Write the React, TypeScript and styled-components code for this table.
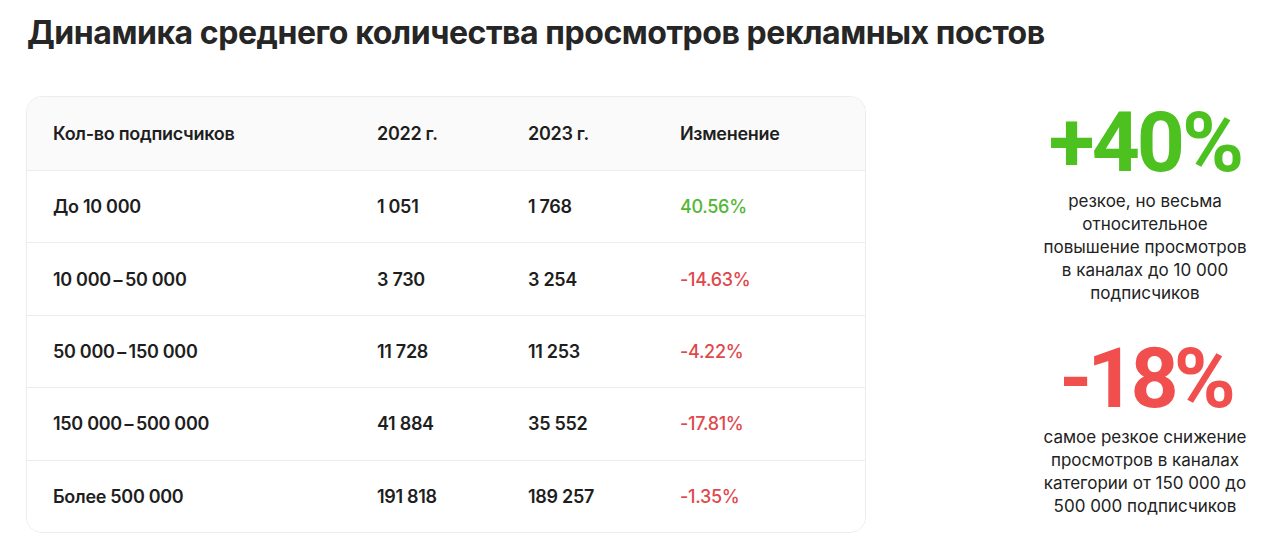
import React from "react";
import styled, { createGlobalStyle } from "styled-components";

const Global = createGlobalStyle`
  html, body { margin: 0; padding: 0; background: #ffffff; }
  body { font-family: Inter, "Noto Sans", sans-serif; color: #1e1e1e; }
`;

const Page = styled.div`
  width: 1280px;
  height: 559px;
  box-sizing: border-box;
  padding: 13px 0 0 26px;
  display: flex;
  flex-direction: column;
`;

const Title = styled.h1`
  margin: 0 0 0 1px;
  font-size: 32px;
  line-height: 40px;
  font-weight: 700;
  color: #262626;
  letter-spacing: -0.45px;
`;

const Body = styled.div`
  margin-top: 43px;
  display: flex;
  align-items: flex-start;
`;

const Card = styled.div`
  width: 840px;
  box-sizing: border-box;
  border: 1px solid #ececec;
  border-radius: 16px;
  overflow: hidden;
`;

const Row = styled.div<{ $head?: boolean }>`
  display: grid;
  grid-template-columns: 324px 151px 152px 1fr;
  align-items: center;
  box-sizing: border-box;
  height: ${(p) => (p.$head ? "73px" : "72.4px")};
  padding-left: 26px;
  background: ${(p) => (p.$head ? "#fafafa" : "#ffffff")};
  & + & { border-top: 1px solid #ececec; }
`;

const Cell = styled.div<{ $tone?: "up" | "down" }>`
  font-size: 18px;
  font-weight: ${(p) => (p.$tone ? 500 : 600)};
  color: ${(p) => (p.$tone === "up" ? "#52b735" : p.$tone === "down" ? "#e0484d" : "#1e1e1e")};
  letter-spacing: -0.3px;
`;

const Side = styled.div`
  flex: 1;
  display: flex;
  flex-direction: column;
  align-items: center;
  padding-left: 144px;
  padding-top: 15px;
`;

const Stat = styled.div`
  display: flex;
  flex-direction: column;
  align-items: center;
  & + & { margin-top: 42px; }
`;

const Big = styled.div<{ $color: string; $spacing: number }>`
  font-family: Roboto, "Noto Sans", sans-serif;
  font-size: 84px;
  line-height: 64px;
  font-weight: 700;
  color: ${(p) => p.$color};
  letter-spacing: ${(p) => p.$spacing}px;
`;

const Note = styled.div`
  margin-top: 15px;
  text-align: center;
  white-space: nowrap;
  font-size: 17px;
  line-height: 23px;
  font-weight: 400;
  color: #222222;
`;

const rows: [string, string, string, string, "up" | "down"][] = [
  ["До 10 000", "1 051", "1 768", "40.56%", "up"],
  ["10 000\u2009–\u200950 000", "3 730", "3 254", "-14.63%", "down"],
  ["50 000\u2009–\u2009150 000", "11 728", "11 253", "-4.22%", "down"],
  ["150 000\u2009–\u2009500 000", "41 884", "35 552", "-17.81%", "down"],
  ["Более 500 000", "191 818", "189 257", "-1.35%", "down"],
];

export default function App() {
  return (
    <>
      <Global />
      <Page>
        <Title>Динамика среднего количества просмотров рекламных постов</Title>
        <Body>
          <Card>
            <Row $head>
              <Cell>Кол-во подписчиков</Cell>
              <Cell>2022 г.</Cell>
              <Cell>2023 г.</Cell>
              <Cell>Изменение</Cell>
            </Row>
            {rows.map((r) => (
              <Row key={r[0]}>
                <Cell>{r[0]}</Cell>
                <Cell>{r[1]}</Cell>
                <Cell>{r[2]}</Cell>
                <Cell $tone={r[4]}>{r[3]}</Cell>
              </Row>
            ))}
          </Card>
          <Side>
            <Stat>
              <Big $color="#4cc11f" $spacing={-3}>+40%</Big>
              <Note>
                резкое, но весьма<br />
                относительное<br />
                повышение просмотров<br />
                в каналах до 10 000<br />
                подписчиков
              </Note>
            </Stat>
            <Stat>
              <Big $color="#f14e4e" $spacing={-5}>-18%</Big>
              <Note>
                самое резкое снижение<br />
                просмотров в каналах<br />
                категории от 150 000 до<br />
                500 000 подписчиков
              </Note>
            </Stat>
          </Side>
        </Body>
      </Page>
    </>
  );
}
